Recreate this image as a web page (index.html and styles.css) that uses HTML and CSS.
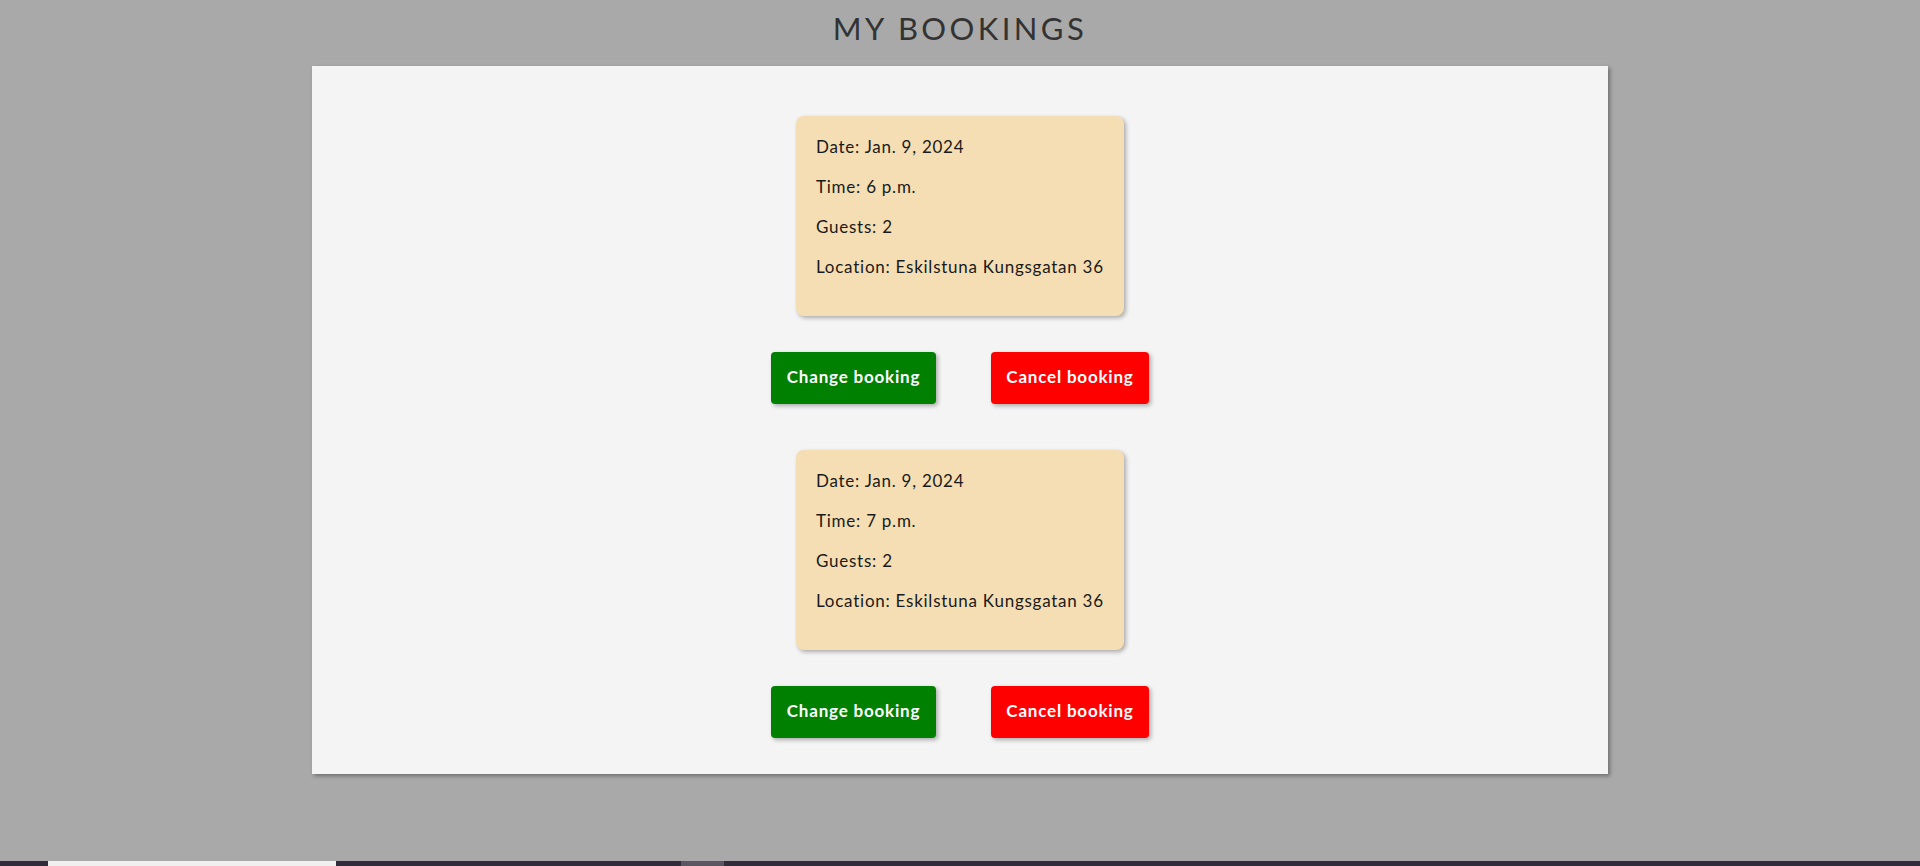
FILE: index.html
```html
<!DOCTYPE html>
<html lang="en">
<head>
<meta charset="utf-8">
<title>My bookings</title>
<link rel="stylesheet" href="styles.css">
</head>
<body>
<h1 class="page-title">MY BOOKINGS</h1>
<main class="panel">
  <section class="booking">
    <div class="card">
      <p>Date: Jan. 9, 2024</p>
      <p>Time: 6 p.m.</p>
      <p>Guests: 2</p>
      <p>Location: Eskilstuna Kungsgatan 36</p>
    </div>
    <div class="actions">
      <button class="btn btn-change">Change booking</button>
      <button class="btn btn-cancel">Cancel booking</button>
    </div>
  </section>
  <section class="booking">
    <div class="card">
      <p>Date: Jan. 9, 2024</p>
      <p>Time: 7 p.m.</p>
      <p>Guests: 2</p>
      <p>Location: Eskilstuna Kungsgatan 36</p>
    </div>
    <div class="actions">
      <button class="btn btn-change">Change booking</button>
      <button class="btn btn-cancel">Cancel booking</button>
    </div>
  </section>
</main>
<div class="bottom-bar">
  <div class="bar-seg bar-light"></div>
  <div class="bar-seg bar-thumb"></div>
</div>
</body>
</html>
```

FILE: styles.css
```css
html, body {
  margin: 0;
  padding: 0;
}
body {
  background: #a9a9a9;
  font-family: Lato, "Noto Sans", sans-serif;
  height: 866px;
  overflow: hidden;
  display: flex;
  flex-direction: column;
  align-items: center;
  position: relative;
}
.page-title {
  margin: 0;
  height: 66px;
  box-sizing: border-box;
  padding-top: 8px;
  font-weight: 400;
  font-size: 31px;
  line-height: 40px;
  letter-spacing: 3.4px;
  color: #333;
}
.panel {
  width: 1296px;
  height: 708px;
  box-sizing: border-box;
  background: #f4f4f4;
  box-shadow: 2px 2px 4px rgba(0,0,0,0.35);
  padding-top: 50px;
  display: flex;
  flex-direction: column;
  align-items: center;
}
.booking {
  display: flex;
  flex-direction: column;
  align-items: center;
  margin-bottom: 46px;
}
.card {
  width: 328px;
  height: 200px;
  box-sizing: border-box;
  padding: 19px 20px 20px;
  background: #f5deb3;
  border-radius: 8px;
  box-shadow: 2px 2px 4px rgba(0,0,0,0.3);
  color: #1a1a1a;
  font-size: 17px;
  line-height: 24px;
  letter-spacing: 0.75px;
}
.card p {
  margin: 0 0 16px;
}
.actions {
  display: flex;
  gap: 55px;
  margin-top: 36px;
}
.btn {
  height: 52px;
  padding: 0 0 4px;
  border: none;
  border-radius: 4px;
  color: #fff;
  font-family: Lato, "Noto Sans", sans-serif;
  font-weight: 700;
  font-size: 17px;
  letter-spacing: 0.8px;
  box-shadow: 2px 2px 4px rgba(0,0,0,0.3);
  cursor: pointer;
}
.btn-change {
  width: 165px;
  background: #008000;
}
.btn-cancel {
  width: 158px;
  background: #ff0000;
}
.bottom-bar {
  position: absolute;
  left: 0;
  right: 0;
  bottom: 0;
  height: 5px;
  background: #302c3b;
}
.bar-seg {
  position: absolute;
  top: 0;
  bottom: 0;
}
.bar-light {
  left: 48px;
  width: 288px;
  background: #f0f0f0;
}
.bar-thumb {
  left: 681px;
  width: 43px;
  background: #5a5763;
}
```
